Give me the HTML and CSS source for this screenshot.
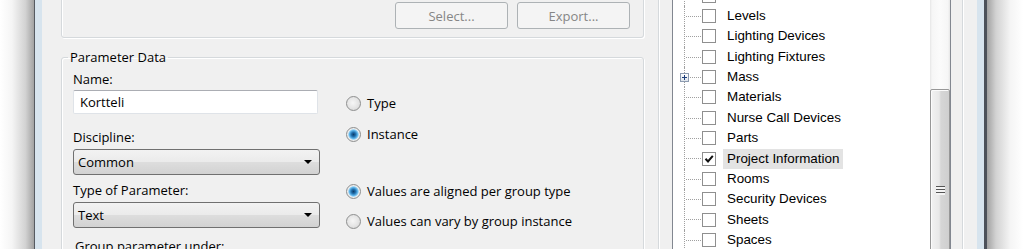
FILE: index.html
```html
<!DOCTYPE html>
<html lang="en">

<head>
    <meta charset="UTF-8">
    <meta name="viewport" content="width=device-width, initial-scale=1.0">
    <title>Project Parameters</title>
    <link rel="stylesheet" href="styles.css">
</head>

<body>
    <div class="screen">
        <div class="shadow-left"></div>
        <div class="frame-left"></div>

        <div class="dialog">
            <div class="left-pane">
                <div class="group group-top">
                    <div class="button-row">
                        <button class="btn" disabled>Select...</button>
                        <button class="btn" disabled>Export...</button>
                    </div>
                </div>

                <fieldset class="group group-data">
                    <legend>Parameter Data</legend>
                    <div class="data-grid">
                        <div class="field-col">
                            <label class="field-label" for="param-name">Name:</label>
                            <input class="text-input" id="param-name" type="text" value="Kortteli">

                            <span class="field-label label-discipline">Discipline:</span>
                            <div class="combo">
                                <span>Common</span>
                                <span class="combo-arrow"></span>
                            </div>

                            <span class="field-label label-type">Type of Parameter:</span>
                            <div class="combo">
                                <span>Text</span>
                                <span class="combo-arrow"></span>
                            </div>

                            <span class="field-label label-group">Group parameter under:</span>
                        </div>

                        <div class="radio-col">
                            <div class="radio-row row-type">
                                <span class="radio"></span>
                                <span>Type</span>
                            </div>
                            <div class="radio-row row-instance">
                                <span class="radio checked"></span>
                                <span>Instance</span>
                            </div>
                            <div class="radio-row row-aligned">
                                <span class="radio checked"></span>
                                <span>Values are aligned per group type</span>
                            </div>
                            <div class="radio-row row-vary">
                                <span class="radio"></span>
                                <span>Values can vary by group instance</span>
                            </div>
                        </div>
                    </div>
                </fieldset>
            </div>

            <div class="right-pane">
                <div class="group group-cats">
                    <div class="tree-box">
                        <ul class="tree">
                            <li class="tree-row"><span class="connector"></span><span class="check"></span><span class="tree-label">Lines</span></li>
                            <li class="tree-row"><span class="connector"></span><span class="check"></span><span class="tree-label">Levels</span></li>
                            <li class="tree-row"><span class="connector"></span><span class="check"></span><span class="tree-label">Lighting Devices</span></li>
                            <li class="tree-row"><span class="connector"></span><span class="check"></span><span class="tree-label">Lighting Fixtures</span></li>
                            <li class="tree-row"><span class="connector"><span class="expander"></span></span><span class="check"></span><span class="tree-label">Mass</span></li>
                            <li class="tree-row"><span class="connector"></span><span class="check"></span><span class="tree-label">Materials</span></li>
                            <li class="tree-row"><span class="connector"></span><span class="check"></span><span class="tree-label">Nurse Call Devices</span></li>
                            <li class="tree-row"><span class="connector"></span><span class="check"></span><span class="tree-label">Parts</span></li>
                            <li class="tree-row"><span class="connector"></span><span class="check">
                                    <svg width="12" height="12" viewBox="0 0 12 12"><path d="M2.5 5.8 L5 8.5 L9.8 2.8" fill="none" stroke="#111" stroke-width="2"/></svg>
                                </span><span class="tree-label selected">Project Information</span></li>
                            <li class="tree-row"><span class="connector"></span><span class="check"></span><span class="tree-label">Rooms</span></li>
                            <li class="tree-row"><span class="connector"></span><span class="check"></span><span class="tree-label">Security Devices</span></li>
                            <li class="tree-row"><span class="connector"></span><span class="check"></span><span class="tree-label">Sheets</span></li>
                            <li class="tree-row"><span class="connector"></span><span class="check"></span><span class="tree-label">Spaces</span></li>
                        </ul>
                        <div class="scrollbar">
                            <div class="thumb">
                                <div class="grip"></div>
                            </div>
                        </div>
                    </div>
                </div>
            </div>
        </div>

        <div class="frame-right"></div>
        <div class="shadow-right"></div>
    </div>
</body>

</html>
```

FILE: styles.css
```css
html,
body {
    margin: 0;
    height: 100%;
}

body {
    background: #fff;
    color: #000;
    font-family: "Open Sans", "Noto Sans", sans-serif;
    font-size: 13px;
    overflow: hidden;
}

.screen {
    display: flex;
    width: 1023px;
    height: 249px;
    overflow: hidden;
}

/* window shadow + aero frame */
.shadow-left {
    width: 34px;
    background: linear-gradient(to right, #fff 0%, #f5f5f5 35%, #d2d2d2 75%, #a2a2a2 100%);
}

.frame-left {
    width: 7px;
    border-left: 1px solid #555a61;
    background: #d7e4ee;
}

.frame-right {
    width: 7px;
    background: #d7e4ee;
    border-right: 3px solid #4c515a;
}

.shadow-right {
    width: 36px;
    background: linear-gradient(to right, #a2a2a2 0%, #d2d2d2 25%, #f5f5f5 65%, #fff 100%);
}

.dialog {
    width: 935px;
    background: #f0f0f0;
    display: flex;
    padding-left: 19px;
    box-sizing: border-box;
}

/* group boxes */
.group {
    border: 1px solid #d5d9dc;
    border-radius: 3px;
    box-shadow: inset 1px 1px 0 #fff, 1px 1px 0 #fff;
}

.left-pane {
    width: 583px;
    display: flex;
    flex-direction: column;
}

.group-top {
    flex-shrink: 0;
    margin-top: -12px;
    height: 50px;
    box-sizing: border-box;
}

.button-row {
    display: flex;
    justify-content: flex-end;
    gap: 9px;
    padding: 13px 13px 0 0;
}

.btn {
    width: 113px;
    height: 27px;
    border: 1px solid #adb2b5;
    border-radius: 3px;
    background: #f4f4f4;
    color: #868686;
    font: inherit;
    padding: 0;
}

.group-data {
    flex: 1 0 auto;
    margin: 11px 0 0;
    padding: 0;
    min-width: 0;
}

.group-data legend {
    margin-left: 6px;
    padding: 0 2px;
    line-height: 16px;
}

.data-grid {
    display: grid;
    grid-template-columns: 247px 1fr;
    column-gap: 26px;
    padding: 7px 0 0 11px;
}

.field-col {
    display: flex;
    flex-direction: column;
    align-items: flex-start;
}

.field-label {
    line-height: 15px;
}

.text-input {
    width: 245px;
    height: 24px;
    box-sizing: border-box;
    margin-top: 3px;
    border: 1px solid #dfe3e8;
    border-top-color: #abadb3;
    border-radius: 2px;
    padding: 0 6px;
    font: inherit;
    background: #fff;
    outline: none;
}

.label-discipline {
    margin-top: 16px;
}

.label-type {
    margin-top: 8px;
}

.label-group {
    margin-top: 11px;
    padding-left: 2px;
}

.combo {
    width: 247px;
    height: 26px;
    box-sizing: border-box;
    margin-top: 4px;
    padding-left: 4px;
    border: 1px solid #707070;
    border-radius: 3px;
    background: linear-gradient(#f2f2f2 0%, #ebebeb 48%, #dddddd 52%, #d2d2d2 100%);
    display: flex;
    align-items: center;
}

.combo-arrow {
    margin-left: auto;
    margin-right: 7px;
    width: 0;
    height: 0;
    border-left: 4px solid transparent;
    border-right: 4px solid transparent;
    border-top: 4px solid #000;
}

/* radio buttons */
.radio-col {
    display: flex;
    flex-direction: column;
}

.radio-row {
    display: flex;
    align-items: center;
    gap: 6px;
    line-height: 15px;
}

.row-type {
    margin-top: 24px;
}

.row-instance {
    margin-top: 16px;
}

.row-aligned {
    margin-top: 42px;
}

.row-vary {
    margin-top: 15px;
}

.radio {
    width: 13px;
    height: 13px;
    border: 1px solid #8e8f8f;
    border-radius: 50%;
    background: radial-gradient(circle at 45% 45%, #f6f6f6 0, #e4e4e4 55%, #cdcdcd 100%);
}

.radio.checked {
    background: radial-gradient(circle at 50% 50%, #0d3d6a 0, #1f6ba8 2px, #5bb2e8 4px, #a8d8f4 5px, #efefef 5.6px, #dcdcdc 100%);
}

/* category tree */
.right-pane {
    margin-left: 14px;
}

.group-cats {
    width: 305px;
    height: 300px;
    margin-top: -20px;
    box-sizing: border-box;
    padding: 3px 11px 0 13px;
}

.tree-box {
    display: flex;
    height: 290px;
    border: 1px solid #828790;
    background: #fff;
}

.tree {
    list-style: none;
    margin: 0;
    padding: 0.46px 0 0;
    flex: 1;
    font-family: "Liberation Sans", Arial, sans-serif;
    font-size: 13.4px;
}

.tree-row {
    display: flex;
    align-items: center;
    height: 20.36px;
}

.connector {
    position: relative;
    width: 28px;
    align-self: stretch;
}

.connector::before {
    content: "";
    position: absolute;
    left: 11px;
    top: 0;
    bottom: 0;
    border-left: 1px dotted #a0a0a0;
}

.connector::after {
    content: "";
    position: absolute;
    left: 13px;
    right: 0;
    top: 10px;
    border-top: 1px dotted #a0a0a0;
}

.expander {
    position: absolute;
    z-index: 1;
    left: 7px;
    top: 6px;
    width: 7px;
    height: 7px;
    border: 1px solid #8c9bb0;
    background: linear-gradient(#fff, #dde3ea);
}

.expander::before,
.expander::after {
    content: "";
    position: absolute;
    background: #1e3f7a;
}

.expander::before {
    left: 1px;
    top: 3px;
    width: 5px;
    height: 1px;
}

.expander::after {
    left: 3px;
    top: 1px;
    width: 1px;
    height: 5px;
}

.check {
    width: 12px;
    height: 12px;
    margin-left: 1px;
    border: 1px solid #8f8f8f;
    background: #fff;
    display: flex;
}

.tree-label {
    margin-left: 7px;
    padding: 0 4px;
    line-height: 20px;
}

.tree-label.selected {
    background: #e3e3e3;
}

.scrollbar {
    width: 20px;
    background: linear-gradient(to right, #e6e6e6 0, #f6f6f6 2px, #fbfbfb 50%, #f6f6f6 calc(100% - 2px), #e6e6e6 100%);
}

.thumb {
    margin-top: 104px;
    height: 200px;
    box-sizing: border-box;
    border: 1px solid #979797;
    border-radius: 2px;
    box-shadow: inset 1px 1px 0 #fbfbfb;
    background: linear-gradient(to right, #f2f2f2 0%, #e8e8e8 45%, #d6d6d6 55%, #cfcfcf 100%);
    padding-top: 96px;
}

.grip {
    width: 9px;
    height: 9px;
    margin: 0 auto;
    background: repeating-linear-gradient(#555 0 1px, #f4f4f4 1px 3px);
}
```
